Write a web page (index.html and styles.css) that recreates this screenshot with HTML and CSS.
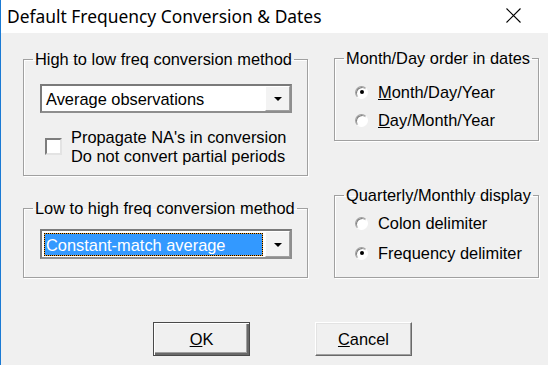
FILE: index.html
```html
<!DOCTYPE html>
<html lang="en">
<head>
    <meta charset="UTF-8">
    <title>Default Frequency Conversion &amp; Dates</title>
    <link rel="stylesheet" href="styles.css">
</head>
<body>
    <div class="window">
        <div class="titlebar">
            <span class="title">Default Frequency Conversion &amp; Dates</span>
            <svg class="close" width="15" height="15" viewBox="0 0 15 15">
                <path d="M0.5 0.5 L14.5 14.5 M14.5 0.5 L0.5 14.5" stroke="#000" stroke-width="1.1" fill="none"/>
            </svg>
        </div>

        <div class="dialog">
            <div class="groups">
                <div class="col col-left">
                    <fieldset class="group group-high">
                        <legend>High to low freq conversion method</legend>
                        <div class="combo">
                            <span class="combo-text">Average observations</span>
                            <span class="combo-btn"><span class="arrow"></span></span>
                        </div>
                        <div class="check-row">
                            <span class="checkbox"></span>
                            <div class="check-label">
                                <div>Propagate NA's in conversion</div>
                                <div>Do not convert partial periods</div>
                            </div>
                        </div>
                    </fieldset>

                    <fieldset class="group group-low">
                        <legend>Low to high freq conversion method</legend>
                        <div class="combo">
                            <span class="combo-text selected">Constant-match average</span>
                            <span class="combo-btn"><span class="arrow"></span></span>
                        </div>
                    </fieldset>
                </div>

                <div class="col col-right">
                    <fieldset class="group group-order">
                        <legend>Month/Day order in dates</legend>
                        <div class="radio-row"><span class="radio checked"></span><span><u>M</u>onth/Day/Year</span></div>
                        <div class="radio-row"><span class="radio"></span><span><u>D</u>ay/Month/Year</span></div>
                    </fieldset>

                    <fieldset class="group group-display">
                        <legend>Quarterly/Monthly display</legend>
                        <div class="radio-row tall"><span class="radio"></span><span>Colon delimiter</span></div>
                        <div class="radio-row tall"><span class="radio checked"></span><span>Frequency delimiter</span></div>
                    </fieldset>
                </div>
            </div>

            <div class="buttons">
                <button class="btn btn-default"><u>O</u>K</button>
                <button class="btn"><u>C</u>ancel</button>
            </div>
        </div>
    </div>
</body>
</html>
```

FILE: styles.css
```css
body {
    margin: 0;
    padding: 0;
    background-color: #f0f0f0;
    font-family: 'Liberation Sans', Arial, sans-serif;
    font-size: 16.4px;
    color: #000;
    overflow: hidden;
}
.window {
    width: 548px;
    height: 365px;
    box-sizing: border-box;
    border-left: 1px solid #1a7ad4;
}
.titlebar {
    height: 33px;
    background-color: #fff;
    display: flex;
    align-items: center;
    justify-content: space-between;
    padding: 0 27px 0 6px;
}
.title {
    font-family: 'Noto Sans', 'Open Sans', sans-serif;
    font-size: 17.4px;
    margin-top: -1px;
}
.close {
    margin-top: -3px;
}
.groups {
    display: flex;
    padding-left: 22px;
    gap: 26px;
}
.col {
    display: flex;
    flex-direction: column;
}
.col-left {
    width: 285px;
    padding-top: 17px;
}
.col-right {
    width: 205px;
    padding-top: 16px;
}
.group {
    margin: 0;
    padding: 0;
    border: 1px solid #a0a0a0;
    box-shadow: inset 1px 1px #fff, 1px 1px #fff;
    min-width: 0;
}
.group legend {
    margin-left: 9px;
    padding: 0 2px;
    line-height: 18px;
}
.group-high {
    padding-bottom: 9px;
}
.group-low {
    margin-top: 23px;
    padding-bottom: 18px;
}
.group-order {
    padding-top: 11px;
    padding-bottom: 6px;
}
.group-display {
    margin-top: 45px;
    padding-top: 4px;
    padding-bottom: 9px;
}

/* combo box */
.combo {
    display: flex;
    width: 252px;
    height: 29px;
    box-sizing: border-box;
    margin: 16px 0 0 16px;
    background-color: #fff;
    border: 2px solid #858585;
    border-color: #7a7a7a #8e8e8e #8e8e8e #7a7a7a;
}
.group-low .combo {
    height: 30px;
    margin-top: 12px;
}
.combo-text {
    flex: 1;
    display: flex;
    align-items: center;
    padding-left: 4px;
    padding-top: 1px;
    line-height: 18px;
}
.combo-text.selected {
    margin: 2px 2px 1px 2px;
    padding-left: 1px;
    padding-top: 0;
    background-color: #3399ff;
    color: #fff;
    border: 1px solid #f0a030;
    outline: 1px dotted #000;
    outline-offset: -1px;
}
.combo-btn {
    width: 25px;
    display: flex;
    align-items: center;
    justify-content: center;
    background-color: #f3f3f3;
    border-left: 1px solid #fff;
    border-top: 1px solid #fff;
    border-right: 1px solid #a0a0a0;
    border-bottom: 1px solid #a0a0a0;
    box-sizing: border-box;
}
.arrow {
    width: 0;
    height: 0;
    border-left: 4px solid transparent;
    border-right: 4px solid transparent;
    border-top: 4px solid #000;
    margin-top: 1px;
}

/* checkbox */
.check-row {
    display: flex;
    align-items: center;
    margin: 15px 0 0 21px;
    line-height: 19px;
}
.checkbox {
    width: 17px;
    height: 17px;
    box-sizing: border-box;
    background-color: #fff;
    border: 2px solid;
    border-color: #7d7d7d #e3e3e3 #e3e3e3 #7d7d7d;
    margin-right: 9px;
    margin-top: -2px;
}

/* radio buttons */
.radio-row {
    display: flex;
    align-items: center;
    height: 28px;
    padding-left: 20px;
}
.radio-row.tall {
    height: 30px;
}
.radio {
    position: relative;
    width: 13px;
    height: 13px;
    box-sizing: border-box;
    border-radius: 50%;
    background-color: #fff;
    border: 1px solid;
    border-color: #a0a0a0 #fff #fff #a0a0a0;
    box-shadow: inset 1px 1px #808080;
    margin-right: 10px;
}
.radio.checked::after {
    content: '';
    position: absolute;
    left: 3.5px;
    top: 3.5px;
    width: 4px;
    height: 4px;
    border-radius: 50%;
    background-color: #000;
}

/* buttons */
.buttons {
    display: flex;
    gap: 65px;
    padding-left: 152px;
    margin-top: 44px;
}
.btn {
    width: 97px;
    height: 34px;
    font-family: 'Liberation Sans', Arial, sans-serif;
    font-size: 16.4px;
    color: #000;
    background-color: #f0f0f0;
    border: 1px solid;
    border-color: #fff #696969 #696969 #fff;
    box-shadow: inset -1px -1px #a0a0a0, inset 1px 1px #e3e3e3;
    padding: 0;
}
.btn-default {
    border: 1px solid #4a4a4a;
    box-shadow: inset 1px 1px #fff, inset -2px -2px #696969, inset -3px -3px #a0a0a0;
}
```
